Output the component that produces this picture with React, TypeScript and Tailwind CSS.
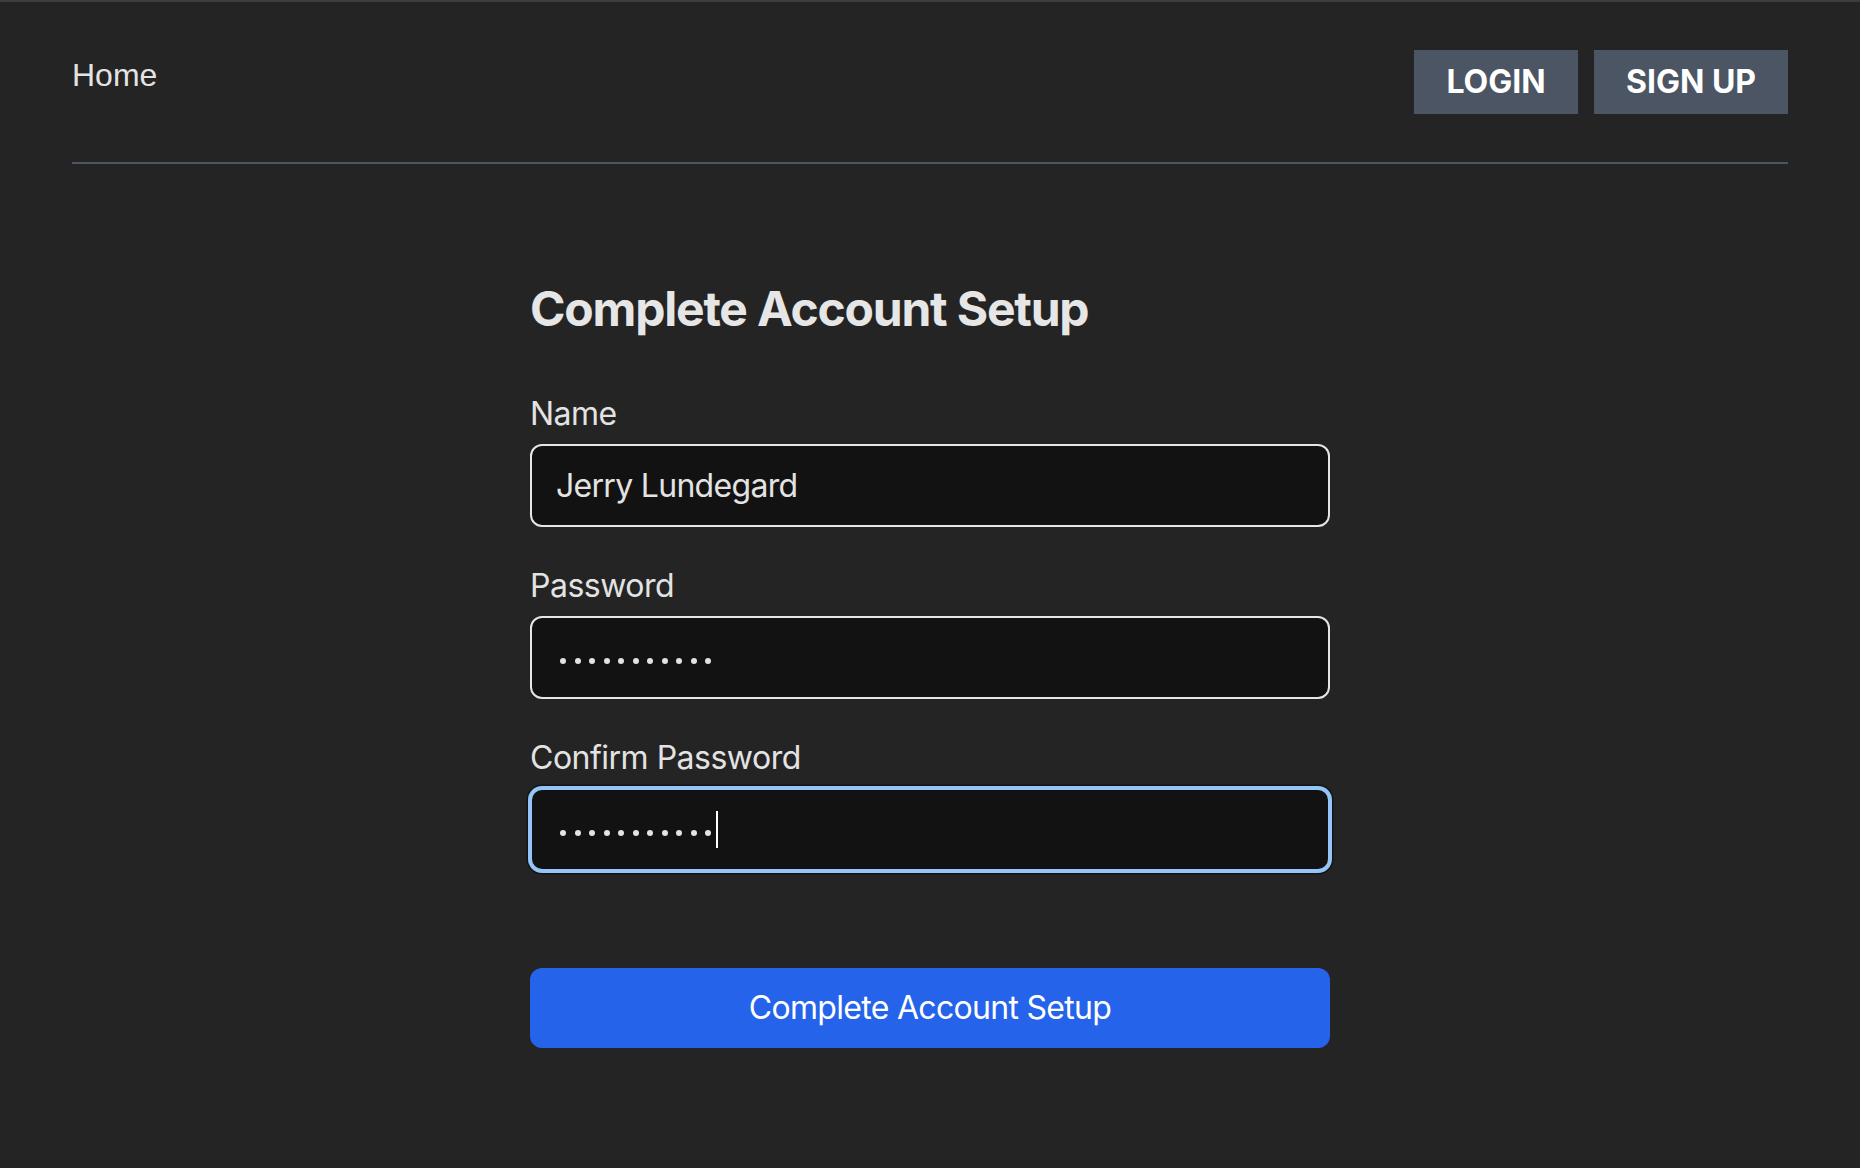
const labelCls = "block text-[32px] leading-[48px] tracking-[-0.5px] text-[#e3e3e3] mb-[6px]";
const boxCls =
  "w-full h-[83px] rounded-[12px] border-2 border-[#e6e6e6] bg-[#121212] px-6 flex items-center";

function Dots({ caret }: { caret?: boolean }) {
  return (
    <div className="flex items-center pt-[6px]">
      <div className="flex gap-[8.5px] pl-[4px]">
        {Array.from({ length: 11 }).map((_, i) => (
          <span key={i} className="w-[6px] h-[6px] rounded-full bg-[#e3e3e3]" />
        ))}
      </div>
      {caret && <span className="ml-[5px] -mt-[6px] w-[2px] h-[37px] bg-white" />}
    </div>
  );
}

export default function App() {
  return (
    <div
      className="min-h-screen bg-[#242424] border-t-2 border-[#3d3d3d] text-[#e3e3e3]"
      style={{ fontFamily: "Inter, 'Liberation Sans', sans-serif" }}
    >
      <div className="px-[72px]">
        <header className="flex items-start justify-between pt-12 pb-12 border-b-2 border-[#4b5563]">
          <a
            href="#"
            className="text-[32px] leading-[48px] text-[#e3e3e3] mt-[1px]"
            style={{ fontFamily: "'Liberation Sans', Arial, sans-serif" }}
          >
            Home
          </a>
          <div className="flex gap-4">
            <button className="h-16 w-[164px] bg-[#4b5563] text-white font-bold text-[32px]">LOGIN</button>
            <button className="h-16 w-[194px] bg-[#4b5563] text-white font-bold text-[32px]">SIGN UP</button>
          </div>
        </header>
      </div>

      <main className="w-[800px] mx-auto mt-[116px] pb-16">
        <h1 className="text-[48px] leading-[58px] font-bold tracking-[-1.2px] text-[#e6e6e6] mb-[52px]">
          Complete Account Setup
        </h1>

        <div className="flex flex-col gap-[35px]">
          <div>
            <label className={labelCls}>Name</label>
            <div className={boxCls}>
              <span className="text-[32px] tracking-[-0.7px] text-[#e3e3e3]">Jerry Lundegard</span>
            </div>
          </div>
          <div>
            <label className={labelCls}>Password</label>
            <div className={boxCls}>
              <Dots />
            </div>
          </div>
          <div>
            <label className={labelCls}>Confirm Password</label>
            <div className={`${boxCls} !border-[#94c5f8] shadow-[0_0_0_2px_#94c5f8,0_0_0_3.5px_#141414]`}>
              <Dots caret />
            </div>
          </div>
        </div>

        <button className="mt-[97px] w-full h-[80px] rounded-[12px] bg-[#2563eb] text-white text-[32px] tracking-[-0.7px]">
          Complete Account Setup
        </button>
      </main>
    </div>
  );
}
